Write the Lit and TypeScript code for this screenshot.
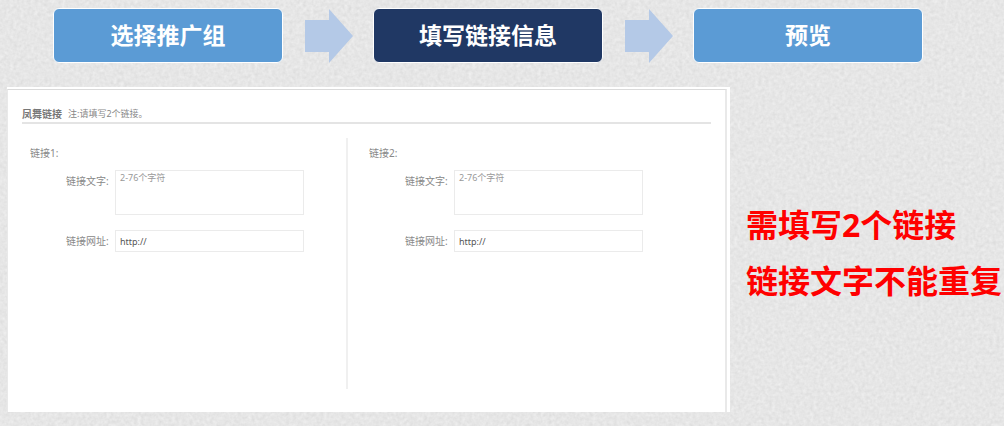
import { LitElement, html, css } from "lit";
import { customElement, property } from "lit/decorators.js";
import { classMap } from "lit/directives/class-map.js";

@customElement("step-bar")
class StepBar extends LitElement {
  @property({ type: Array }) steps: string[] = [];
  @property({ type: Number }) current = 0;

  static styles = css`
    :host { display: block; }
    .steps {
      display: flex;
      align-items: center;
      margin: 0;
      padding: 8px 81px 0 53px;
      list-style: none;
    }
    .item { flex: 1 1 0; }
    .step {
      display: block;
      box-sizing: border-box;
      width: 100%;
      height: 55px;
      padding: 0 0 2px;
      border: 1px solid #fff;
      border-radius: 6px;
      background: #5b9bd5;
      color: #fff;
      font: bold 23px/51px "Noto Sans CJK SC", sans-serif;
    }
    .active { background: #203864; }
    .arrow { flex: none; display: block; width: 48px; height: 54px; margin: 0 20px 0 22px; }
  `;

  render() {
    return html`<ol class="steps">
      ${this.steps.map(
        (name, i) => html`${i > 0
            ? html`<svg class="arrow" viewBox="0 0 48 54" aria-hidden="true">
                <path d="M0 11H24V0L48 27L24 54V43H0Z" fill="#b4c9e7" />
              </svg>`
            : ""}
          <li class="item">
            <button type="button" class=${classMap({ step: true, active: i === this.current })}>${name}</button>
          </li>`
      )}
    </ol>`;
  }
}

@customElement("link-fields")
class LinkFields extends LitElement {
  @property({ type: Number }) number = 1;

  static styles = css`
    :host { display: block; }
    .group { margin: 0; padding: 0; border: 0; min-width: 0; }
    .title { padding: 7px 0 0; margin: 0 0 9px; font-size: 10px; line-height: 16px; color: #888; }
    .row { display: flex; align-items: flex-start; margin: 0 0 15px 36px; }
    .label { flex: none; width: 49px; font-size: 10px; line-height: 22px; color: #888; }
    .box {
      box-sizing: border-box;
      flex: 0 1 189px;
      min-width: 0;
      margin: 0;
      padding: 0 4px;
      border: 1px solid #ebebeb;
      border-radius: 0;
      background: #fff;
      color: #555;
      font: 9px/14px "Noto Sans", "Noto Sans CJK SC", sans-serif;
      resize: none;
    }
    .area { height: 45px; }
    .area::placeholder { color: #999; opacity: 1; }
    .line { height: 22px; }
  `;

  render() {
    return html`<fieldset class="group">
      <legend class="title">链接${this.number}:</legend>
      <div class="row">
        <label class="label" for="text">链接文字:</label>
        <textarea class="box area" id="text" placeholder="2-76个字符"></textarea>
      </div>
      <div class="row">
        <label class="label" for="url">链接网址:</label>
        <input class="box line" id="url" type="text" value="http://" />
      </div>
    </fieldset>`;
  }
}

@customElement("app-root")
class AppRoot extends LitElement {
  static styles = css`
    :host {
      display: block;
      position: relative;
      isolation: isolate;
      box-sizing: border-box;
      min-height: 100vh;
      overflow: hidden;
      background: #e6e6e6;
      font-family: "Noto Sans", "Noto Sans CJK SC", sans-serif;
    }
    .paper { position: absolute; inset: 0; z-index: -1; width: 100%; height: 100%; }
    .body {
      display: grid;
      grid-template-columns: minmax(0, 1fr) 258px;
      column-gap: 16px;
      padding: 24px 0 14px 7px;
    }
    .panel { padding: 2px 3px 0 0; background: #fff; }
    .frame {
      border: solid #e9e9e9;
      border-width: 1px 2px 0 1px;
      border-top-color: #dadada;
      padding: 16px 14px 23px;
    }
    .head {
      display: flex;
      align-items: center;
      gap: 6px;
      border-bottom: 2px solid #e4e4e4;
    }
    .heading { margin: 0; font-size: 10px; line-height: 16px; font-weight: bold; color: #777; }
    .hint { margin: 0; font-size: 9px; line-height: 16px; color: #888; }
    .columns { display: grid; grid-template-columns: 326fr 363fr; margin-top: 14px; min-height: 251px; }
    .first { padding-left: 8px; border-right: 2px solid #f0f0f0; }
    .second { padding-left: 21px; }
    .notes { padding-top: 110px; color: #f00; font-size: 32px; line-height: 56px; font-weight: bold; white-space: nowrap; }
    .note { margin: 0; }
  `;

  render() {
    return html`
      <svg class="paper" aria-hidden="true">
        <filter id="grain" x="0" y="0" width="100%" height="100%" color-interpolation-filters="sRGB">
          <feTurbulence type="fractalNoise" baseFrequency="0.29" numOctaves="2" seed="4" />
          <feColorMatrix
            values="0.07 0.05 0 0 0.842  0.07 0.05 0 0 0.842  0.07 0.05 0 0 0.842  0 0 0 0 1"
          />
        </filter>
        <rect width="100%" height="100%" filter="url(#grain)" />
      </svg>
      <step-bar .steps=${["选择推广组", "填写链接信息", "预览"]} .current=${1}></step-bar>
      <main class="body">
        <section class="panel">
          <div class="frame">
            <header class="head">
              <h1 class="heading">凤舞链接</h1>
              <p class="hint">注:请填写2个链接。</p>
            </header>
            <form class="columns">
              <link-fields class="first" .number=${1}></link-fields>
              <link-fields class="second" .number=${2}></link-fields>
            </form>
          </div>
        </section>
        <aside class="notes">
          <p class="note">需填写2个链接</p>
          <p class="note">链接文字不能重复</p>
        </aside>
      </main>
    `;
  }
}
